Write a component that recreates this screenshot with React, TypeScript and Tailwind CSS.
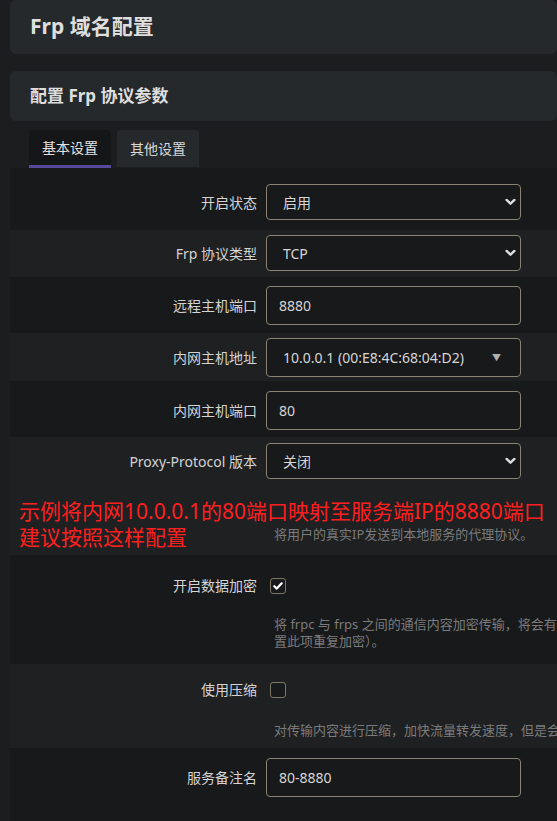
import React from 'react';

const Chevron = () => (
  <svg
    width="11"
    height="7"
    viewBox="0 0 11 7"
    className="absolute right-[4px] top-1/2 -translate-y-1/2"
  >
    <polyline
      points="1.6 1.4 5.5 5.2 9.4 1.4"
      fill="none"
      stroke="#dedede"
      strokeWidth="2.4"
      strokeLinecap="round"
      strokeLinejoin="round"
    />
  </svg>
);

const Select: React.FC<{ value: string }> = ({ value }) => (
  <div className="relative w-[255px] h-[36px] rounded-[4px] border border-[#8a8272] bg-[#18191b] flex items-center pl-[16px] text-[14px] text-[#d6d6d6]">
    {value}
    <Chevron />
  </div>
);

const Input: React.FC<{ value: string }> = ({ value }) => (
  <div className="w-[255px] h-[39px] rounded-[4px] border border-[#8a8272] bg-[#18191b] flex items-center pl-[12px] text-[14px] text-[#d6d6d6]">
    {value}
  </div>
);

const Checkbox: React.FC<{ checked?: boolean }> = ({ checked }) => (
  <div className="ml-[4px] w-[16px] h-[16px] rounded-[3px] border border-[#7d7767] bg-[#18191b] flex items-center justify-center">
    {checked && (
      <svg width="10" height="8" viewBox="0 0 10 8">
        <polyline
          points="1.3 4.2 3.8 6.6 8.7 1.3"
          fill="none"
          stroke="#ffffff"
          strokeWidth="2.2"
          strokeLinecap="round"
          strokeLinejoin="round"
        />
      </svg>
    )}
  </div>
);

const Field: React.FC<{
  label: string;
  light?: boolean;
  className: string;
  children: React.ReactNode;
  desc?: React.ReactNode;
  descClass?: string;
}> = ({ label, light, className, children, desc, descClass }) => (
  <div className={`${light ? 'bg-[#1e2022]' : 'bg-[#18191b]'} ${className}`}>
    <div className="flex items-center">
      <div className="w-[247px] text-right text-[14px] text-[#d4d4d4]">{label}</div>
      <div className="ml-[9px]">{children}</div>
    </div>
    {desc && (
      <div className={`pl-[264px] text-[13px] leading-[17px] text-[#7b7b7b] whitespace-nowrap ${descClass}`}>
        {desc}
      </div>
    )}
  </div>
);

export default function App() {
  return (
    <div className="relative w-[557px] h-[821px] overflow-hidden bg-[#1c1d1f] font-['Noto_Sans','Noto_Sans_CJK_SC',sans-serif]">
      <div className="pl-[10px]">
        {/* Page title */}
        <div className="h-[54px] rounded-md bg-[#26292b] flex items-center pl-[20px]">
          <h1 className="text-[21px] font-bold text-[#dedede]">Frp 域名配置</h1>
        </div>

        {/* Section header */}
        <div className="mt-[17px] h-[50px] rounded-md bg-[#26292b] flex items-center pl-[20px]">
          <h2 className="text-[17px] font-bold text-[#dedede]">配置 Frp 协议参数</h2>
        </div>

        {/* Tabs */}
        <div className="pt-[9px] pl-[19px] flex gap-[6px]">
          <div className="w-[82px] h-[38px] rounded-t-[4px] bg-[#151618] border-b-[3px] border-[#574a9c] flex items-center justify-center text-[14px] text-[#e2e2e2]">
            基本设置
          </div>
          <div className="w-[82px] h-[37px] rounded-t-[4px] bg-[#26292b] flex items-center justify-center text-[14px] text-[#d8d8d8]">
            其他设置
          </div>
        </div>

        {/* Fields */}
        <div className="bg-[#18191b]">
          <Field label="开启状态" className="h-[62px] pt-[16px]">
            <Select value="启用" />
          </Field>
          <Field label="Frp 协议类型" light className="h-[47px] pt-[5px]">
            <Select value="TCP" />
          </Field>
          <Field label="远程主机端口" className="h-[56px] pt-[9px]">
            <Input value="8880" />
          </Field>
          <Field label="内网主机地址" light className="h-[48px] pt-[5px]">
            <div className="relative w-[255px] h-[39px] rounded-[4px] border border-[#8a8272] bg-[#18191b] flex items-center pl-[16px] text-[14px] text-[#d6d6d6]">
              10.0.0.1 (00:E8:4C:68:04:D2)
              <span className="absolute right-[19px] top-1/2 -translate-y-1/2 text-[9px] text-[#b0b0b0]">▼</span>
            </div>
          </Field>
          <Field label="内网主机端口" className="h-[56px] pt-[10px]">
            <Input value="80" />
          </Field>
          <Field
            label="Proxy-Protocol 版本"
            light
            className="h-[118px] pt-[6px]"
            desc="将用户的真实IP发送到本地服务的代理协议。"
            descClass="mt-[47px]"
          >
            <Select value="关闭" />
          </Field>
          <Field
            label="开启数据加密"
            className="h-[109px] pt-[20px]"
            desc={
              <>
                将 frpc 与 frps 之间的通信内容加密传输，将会有效防止流量被拦截（若已启用 TLS 则无需设
                <br />
                置此项重复加密）。
              </>
            }
            descClass="mt-[20px]"
          >
            <Checkbox checked />
          </Field>
          <Field
            label="使用压缩"
            light
            className="h-[84px] pt-[15px]"
            desc="对传输内容进行压缩，加快流量转发速度，但是会额外消耗一些 CPU 资源。"
            descClass="mt-[22px]"
          >
            <Checkbox />
          </Field>
          <Field label="服务备注名" className="h-[80px] pt-[10px]">
            <Input value="80-8880" />
          </Field>
        </div>
      </div>

      {/* Red annotation */}
      <div className="absolute left-[19px] top-[498px] text-[21px] leading-[26px] text-[#ff1f1f] whitespace-nowrap">
        示例将内网10.0.0.1的80端口映射至服务端IP的8880端口
        <br />
        建议按照这样配置
      </div>
    </div>
  );
}
